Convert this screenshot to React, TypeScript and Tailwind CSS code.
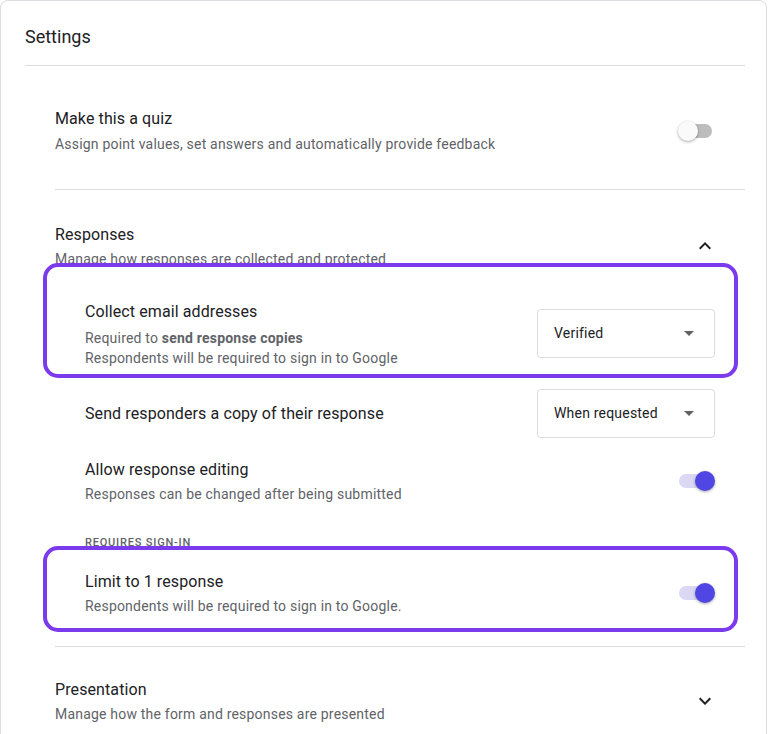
import React from "react";

function Toggle({ on }: { on: boolean }) {
  return (
    <div className="relative h-[20px] w-[37px] shrink-0">
      <div
        className={
          on
            ? "absolute left-[1px] right-[3px] top-[3px] h-[14px] rounded-full bg-[#dbd8f6]"
            : "absolute left-[1px] right-[3px] top-[3px] h-[14px] rounded-full bg-[#bdbdbd]"
        }
      />
      <div
        className={
          on
            ? "absolute right-0 top-0 h-[20px] w-[20px] rounded-full bg-[#5046e4] shadow-[0_1px_3px_rgba(0,0,0,0.35)]"
            : "absolute left-0 top-0 h-[20px] w-[20px] rounded-full bg-[#fafafa] shadow-[0_1px_3px_rgba(0,0,0,0.35)]"
        }
      />
    </div>
  );
}

function Dropdown({ label }: { label: string }) {
  return (
    <div className="flex h-[49px] w-[178px] shrink-0 items-center justify-between rounded-[4px] border border-[#dadce0] pl-4 pr-[20px]">
      <span className="text-[14px] tracking-[0.2px] text-[#202124]">{label}</span>
      <svg width="10" height="5" viewBox="0 0 10 5">
        <path d="M0 0 L10 0 L5 5 Z" fill="#5f6368" />
      </svg>
    </div>
  );
}

function Chevron({ up }: { up: boolean }) {
  return (
    <svg width="24" height="24" viewBox="0 0 24 24" className="shrink-0">
      {up ? (
        <path d="M12 8l-6 6 1.41 1.41L12 10.83l4.59 4.58L18 14z" fill="#202124" />
      ) : (
        <path d="M16.59 8.59L12 13.17 7.41 8.59 6 10l6 6 6-6z" fill="#202124" />
      )}
    </svg>
  );
}

function Highlight({ cls }: { cls: string }) {
  return (
    <div
      className={
        "pointer-events-none absolute rounded-[15px] border-[4px] border-[#7c3aed] " + cls
      }
    />
  );
}

const title = "text-[16px] leading-[24px] tracking-[0.1px] text-[#202124]";
const sub = "text-[14px] leading-[20px] tracking-[0.2px] text-[#5f6368]";

export default function App() {
  return (
    <div
      className="min-h-[734px] w-[768px] overflow-hidden bg-white"
      style={{ fontFamily: "Roboto, 'Noto Sans', Arial, sans-serif" }}
    >
      <div className="w-[767px] rounded-t-[8px] border border-[#dadce0] pl-6 pr-[21px] pb-10">
        {/* Header */}
        <div className="border-b border-[#dadce0] pt-[24px] pb-[16px]">
          <h1 className="text-[18px] leading-[24px] text-[#202124]">Settings</h1>
        </div>

        <div className="ml-[30px]">
          {/* Quiz */}
          <div className="flex items-center justify-between border-b border-[#dadce0] pt-[41px] pb-[35px] pr-[30px]">
            <div>
              <div className={title}>Make this a quiz</div>
              <div className={"mt-[3px] " + sub}>
                Assign point values, set answers and automatically provide feedback
              </div>
            </div>
            <Toggle on={false} />
          </div>

          {/* Responses */}
          <div className="border-b border-[#dadce0] pt-[33px] pb-[30px]">
            <div className="flex items-center justify-between pr-[28px]">
              <div>
                <div className={title}>Responses</div>
                <div className={"mt-[2px] " + sub}>
                  Manage how responses are collected and protected
                </div>
              </div>
              <Chevron up={true} />
            </div>

            {/* Collect email */}
            <div className="relative mt-[31px] flex items-start justify-between pl-[30px] pr-[30px]">
              <div>
                <div className={title}>Collect email addresses</div>
                <div className="mt-[5px] text-[14px] leading-[19px] tracking-[0.2px] text-[#5f6368]">
                  Required to <span className="font-bold">send response copies</span>
                </div>
                <div className="text-[14px] leading-[20px] tracking-[0.2px] text-[#5f6368]">
                  Respondents will be required to sign in to Google
                </div>
              </div>
              <div className="mt-[9px]">
                <Dropdown label="Verified" />
              </div>
              <Highlight cls="left-[-12px] right-[7px] top-[-37px] bottom-[-10px]" />
            </div>

            {/* Send copy */}
            <div className="mt-[21px] flex items-center justify-between pl-[30px] pr-[30px]">
              <div className={title}>Send responders a copy of their response</div>
              <Dropdown label="When requested" />
            </div>

            {/* Allow editing */}
            <div className="mt-[20px] flex items-center justify-between pl-[30px] pr-[30px]">
              <div>
                <div className={title}>Allow response editing</div>
                <div className={"mt-[2px] " + sub}>
                  Responses can be changed after being submitted
                </div>
              </div>
              <Toggle on={true} />
            </div>

            <div className="mt-[31px] pl-[30px] text-[11px] font-medium uppercase leading-[16px] tracking-[0.8px] text-[#5f6368]">
              Requires sign-in
            </div>

            {/* Limit */}
            <div className="relative mt-[19px] flex items-center justify-between pl-[30px] pr-[30px]">
              <div>
                <div className={title}>Limit to 1 response</div>
                <div className={"mt-[2px] " + sub}>
                  Respondents will be required to sign in to Google.
                </div>
              </div>
              <Toggle on={true} />
              <Highlight cls="left-[-12px] right-[7px] top-[-24px] bottom-[-16px]" />
            </div>
          </div>

          {/* Presentation */}
          <div className="flex items-center justify-between pt-[31px] pr-[28px]">
            <div>
              <div className={title}>Presentation</div>
              <div className={"mt-[2px] " + sub}>
                Manage how the form and responses are presented
              </div>
            </div>
            <Chevron up={false} />
          </div>
        </div>
      </div>
    </div>
  );
}
